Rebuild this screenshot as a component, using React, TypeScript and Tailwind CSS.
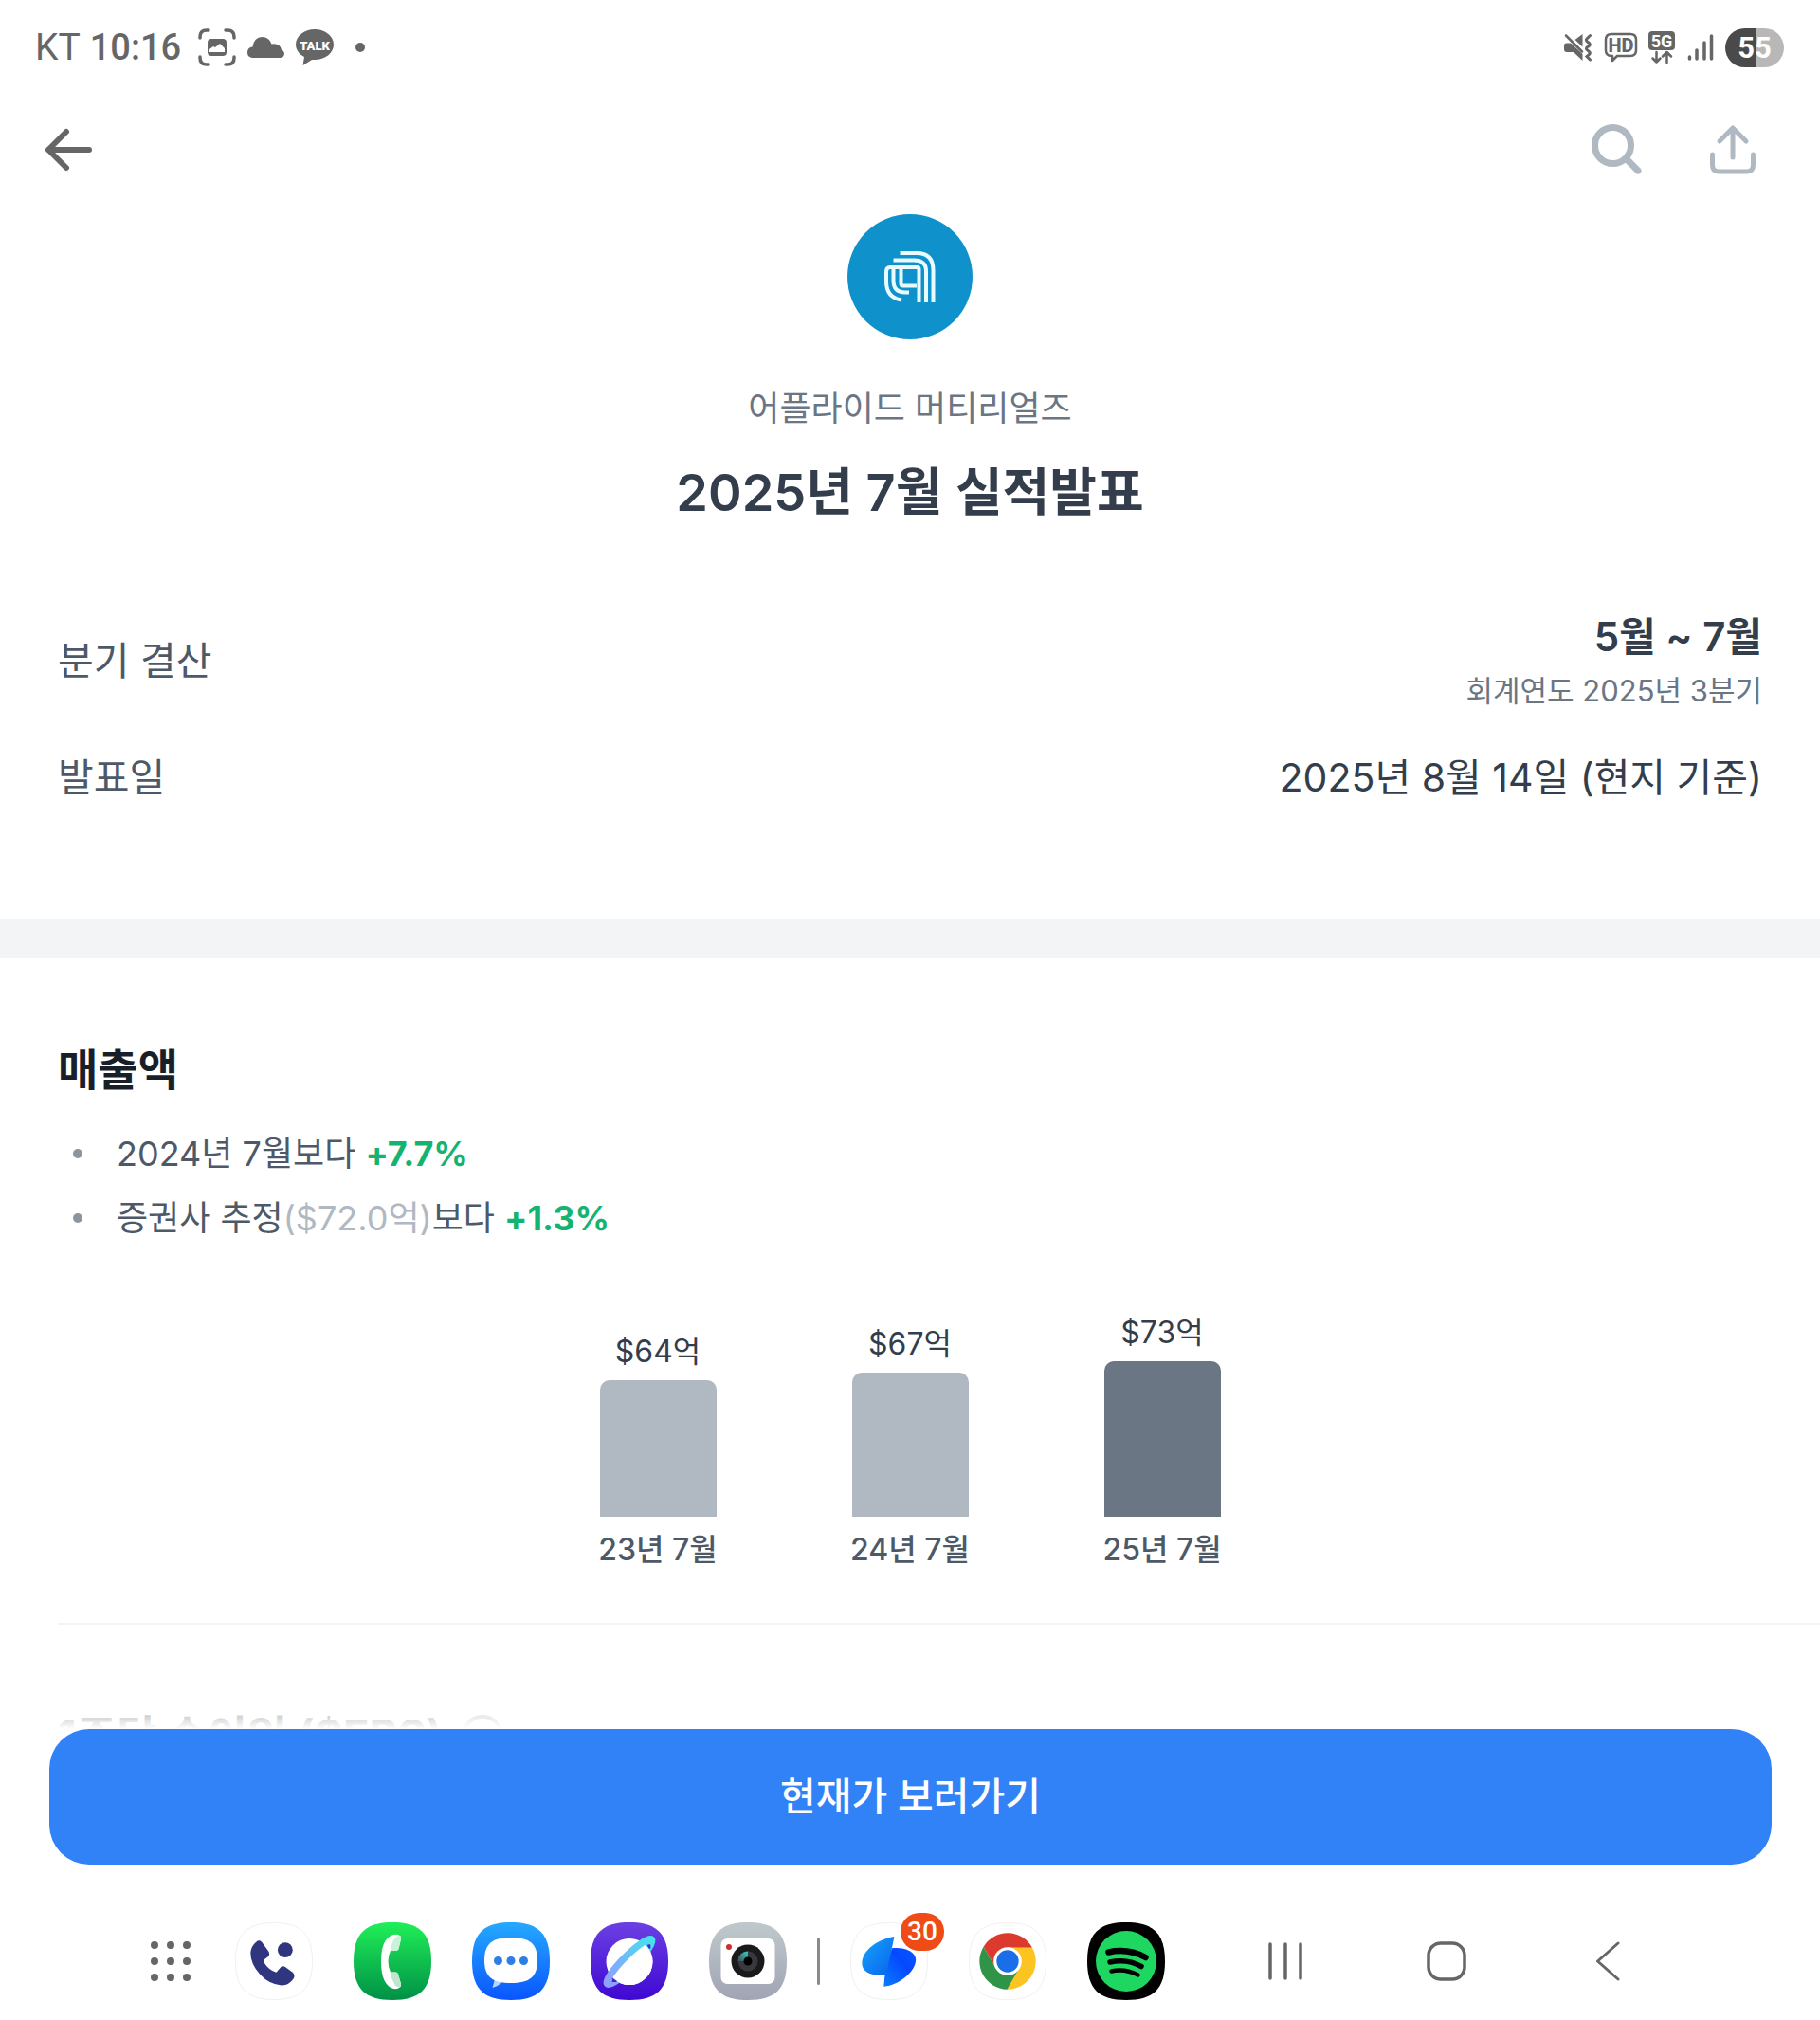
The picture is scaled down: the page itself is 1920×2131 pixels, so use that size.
import type { ReactNode } from "react";

const SQUIRCLE = "M41 0C70 0 82 12 82 41S70 82 41 82S0 70 0 41S12 0 41 0Z";

function CaptureIcon() {
  return (
    <svg width="40" height="40" viewBox="0 0 40 40" fill="none" aria-hidden="true">
      <path
        d="M2 10V9Q2 2 9 2H11M29 2H31Q38 2 38 9V10M38 30V31Q38 38 31 38H29M11 38H9Q2 38 2 31V30"
        stroke="#666"
        strokeWidth="3.500"
        strokeLinecap="round"
      />
      <rect x="10" y="11" width="20" height="18" rx="4" fill="#666" />
      <path d="M12 25V22L16 19L18 20L23 16L28 21V25Z" fill="#fff" />
    </svg>
  );
}

function CloudIcon() {
  return (
    <svg width="40" height="24" viewBox="0 0 40 24" fill="#666" aria-hidden="true">
      <path d="M6 23Q1 22 1 17.500Q1 12 6.500 11.500Q8 1 16.500 1Q24 1 26.500 8.500Q35 7 37 14.500Q40 16 40 19Q39.500 22.500 36 23Z" />
    </svg>
  );
}

function TalkIcon() {
  return (
    <svg width="42" height="40" viewBox="0 0 42 40" aria-hidden="true">
      <path
        d="M21 1C32 1 41 8 41 17S32 33 21 33H18L8.500 39L10 30C4 27 1 22 1 17C1 8 10 1 21 1Z"
        fill="#666"
      />
      <text
        x="21"
        y="22.500"
        textAnchor="middle"
        fontSize="13"
        fontWeight="900"
        fontFamily="Roboto, sans-serif"
        fill="#fff"
      >
        TALK
      </text>
    </svg>
  );
}

function MuteIcon() {
  return (
    <svg width="31" height="30" viewBox="-2 -1 31 30" fill="#666" aria-hidden="true">
      <path d="M-1 12Q-1 9.500 1.500 9.500H6L18.500 21V28L9 19H2Q-1 19 -1 16Z" />
      <path d="M18.500 0V13.500L10.500 6Z" />
      <path d="M1 1.500L18 18.500" stroke="#666" strokeWidth="2.500" strokeLinecap="round" />
      <path
        d="M26.500 1.500L22.500 5.500Q22 7 23.500 8L25.500 9.500Q27 11 25.500 12.500L23 14Q22 15.500 23 16.500L25.500 18.500Q27 20 25.500 21.500L23 23.500L26.500 27"
        stroke="#666"
        strokeWidth="3"
        strokeLinecap="round"
        fill="none"
      />
    </svg>
  );
}

function HdIcon() {
  return (
    <svg width="36" height="32" viewBox="0 0 36 32" fill="none" aria-hidden="true">
      <path
        d="M8 2H28Q34 2 34 8V19Q34 25 28 25H14L9 30V25H8Q2 25 2 19V8Q2 2 8 2Z"
        stroke="#666"
        strokeWidth="2.500"
        strokeLinejoin="round"
      />
      <text
        x="18"
        y="20.500"
        textAnchor="middle"
        fontSize="20"
        fontWeight="800"
        fontFamily="Roboto, sans-serif"
        fill="#666"
      >
        HD
      </text>
    </svg>
  );
}

function FiveGIcon() {
  return (
    <svg width="30" height="36" viewBox="0 0 30 36" fill="none" aria-hidden="true">
      <rect x="1" y="1" width="28" height="20" rx="4" fill="#666" />
      <text
        x="15"
        y="17.500"
        textAnchor="middle"
        fontSize="18"
        fontWeight="700"
        fontFamily="Roboto, sans-serif"
        fill="#fff"
      >
        5G
      </text>
      <path
        d="M9.500 23V33M5.500 29.500L9.500 33.500L13.500 29.500M20.500 34V24M16 27.500L20.500 23L25 27.500"
        stroke="#666"
        strokeWidth="2.500"
        strokeLinecap="round"
        strokeLinejoin="round"
      />
    </svg>
  );
}

function SignalIcon() {
  return (
    <svg width="28" height="30" viewBox="0 0 28 30" stroke="#666" strokeWidth="3.500" strokeLinecap="round" aria-hidden="true">
      <path d="M2.500 25V27M10 18V27M18 10V27M25.500 3V27" />
    </svg>
  );
}

function StatusBar() {
  return (
    <div className="flex h-[100px] items-center justify-between pl-[37px] pr-[38px] font-[Roboto,sans-serif] text-[#666]">
      <div className="flex items-center gap-[10px]">
        <span className="text-[39px] leading-none">KT</span>
        <span className="text-[38px] font-medium leading-none">10:16</span>
        <span className="flex items-center gap-[11px] pl-2">
          <CaptureIcon />
          <CloudIcon />
          <TalkIcon />
        </span>
        <span className="ml-3 size-[10px] rounded-full bg-[#666]" />
      </div>
      <div className="flex items-center gap-3">
        <MuteIcon />
        <div className="flex items-center gap-[10px]">
          <HdIcon />
          <FiveGIcon />
        </div>
        <SignalIcon />
        <span className="flex h-[41px] w-[62px] items-center justify-center rounded-full bg-[linear-gradient(90deg,#4a4a4a_54%,#b8b8b8_54%)] text-[31px] font-bold leading-none text-white">
          55
        </span>
      </div>
    </div>
  );
}

function Header() {
  return (
    <header className="flex h-[115px] items-center justify-between pl-[47px] pr-[66px]">
      <button type="button" aria-label="뒤로">
        <svg width="50" height="46" viewBox="0 0 50 46" fill="none" stroke="#666" strokeWidth="6" strokeLinecap="round" strokeLinejoin="round">
          <path d="M23 4L4 23L23 42M4 23H47" />
        </svg>
      </button>
      <div className="flex items-center gap-[69px]">
        <button type="button" aria-label="검색">
          <svg width="56" height="56" viewBox="0 0 56 56" fill="none" stroke="#b0b8c1" strokeLinecap="round">
            <circle cx="24.500" cy="23.500" r="19" strokeWidth="7" />
            <path d="M39 38L51 50" strokeWidth="7" />
          </svg>
        </button>
        <button type="button" aria-label="공유">
          <svg width="52" height="56" viewBox="0 0 52 56" fill="none" stroke="#b0b8c1" strokeWidth="5" strokeLinecap="round" strokeLinejoin="round">
            <path d="M26 36V5M12 19L26 5L40 19" />
            <path d="M4.500 33V44Q4.500 51 11.500 51H40.500Q47.500 51 47.500 44V33" />
          </svg>
        </button>
      </div>
    </header>
  );
}

function CompanyLogo() {
  return (
    <div className="flex size-[132px] items-center justify-center rounded-full bg-[#0f91cc]">
      <svg width="54" height="54" viewBox="0 0 54 54" fill="none" stroke="#e9fbff" strokeWidth="4" aria-label="Applied Materials" role="img">
        <path d="M16.500 2H34Q51.500 2 51.500 20V54" />
        <path d="M9.500 9.500H31Q44 9.500 44 21V54" />
        <path d="M36.500 54V19Q36.500 17 34.500 17H6Q2 17 2 22V32Q2 49 18 51.500" />
        <path d="M9.500 18V31Q9.500 43.500 22 43.500H26" />
        <path d="M17.500 18V34Q17.500 36.500 20 36.500H34" />
      </svg>
    </div>
  );
}

function Section({ title, info, children }: { title: string; info?: boolean; children?: ReactNode }) {
  return (
    <section className="px-[61px] pt-[85px]">
      <h2 className="flex items-center gap-5 whitespace-nowrap text-[46px] font-bold leading-[64px] text-[#191f28]">
        {title}
        {info && <span className="size-11 rounded-full border-4 border-[#8b95a1]" />}
      </h2>
      {children}
    </section>
  );
}

function Bullet({ children }: { children: ReactNode }) {
  return (
    <li className="flex items-center gap-[36px] pl-4">
      <span className="size-[10px] rounded-full bg-[#8b95a1]" />
      <span>{children}</span>
    </li>
  );
}

const BARS = [
  { value: "$64억", label: "23년 7월", height: 144, color: "bg-[#b0b8c1]" },
  { value: "$67억", label: "24년 7월", height: 152, color: "bg-[#b0b8c1]" },
  { value: "$73억", label: "25년 7월", height: 164, color: "bg-[#6b7684]" },
];

function RevenueChart() {
  return (
    <div className="mt-[67px] flex items-end justify-center gap-[143px]">
      {BARS.map((bar) => (
        <div key={bar.label} className="flex w-[123px] flex-col items-center whitespace-nowrap">
          <span className="text-[32px] leading-10 text-[#333d4b]">{bar.value}</span>
          <div className={`mt-[10px] w-full rounded-t-[10px] ${bar.color}`} style={{ height: bar.height }} />
          <span className="mt-[15px] text-[32px] font-medium leading-10 text-[#4e5968]">{bar.label}</span>
        </div>
      ))}
    </div>
  );
}

function AppTile({ label, children }: { label: string; children: ReactNode }) {
  return (
    <button type="button" aria-label={label} className="relative size-[82px]">
      {children}
    </button>
  );
}

function Dock() {
  return (
    <nav className="flex items-center justify-between pb-[21px] pl-[159px] pr-[211px] pt-[61px]">
      <div className="flex items-center gap-[43px]">
        <button type="button" aria-label="앱 목록" className="mr-1">
          <svg width="42" height="42" viewBox="0 0 42 42" fill="#666">
            {[4, 21, 38].map((y) => [4, 21, 38].map((x) => <circle key={`${x}-${y}`} cx={x} cy={y} r="4" />))}
          </svg>
        </button>
        <AppTile label="전화 앱">
          <svg width="82" height="82" viewBox="-0.5 -0.5 83 83">
            <path d={SQUIRCLE} fill="#fff" stroke="#f0f0f0" />
            <path
              d="M22 20.500Q25 17.500 28 20.500L35 30Q37 33 35 36L31 39Q29.500 40.500 30.500 42.500Q35 50 43.500 53L48.500 47Q50.500 45.500 53 47L61 53Q64 56 62 59.500Q57 67 49 66.700Q36 66 26 55Q16 44 16 32Q16.500 25 22 20.500Z"
              fill="#2f357e"
            />
            <circle cx="53" cy="29" r="8" fill="#2f357e" />
          </svg>
        </AppTile>
        <AppTile label="전화">
          <svg width="82" height="82" viewBox="0 0 82 82">
            <linearGradient id="call" x1="0" y1="0" x2="0" y2="1">
              <stop stopColor="#20ef57" />
              <stop offset="1" stopColor="#009046" />
            </linearGradient>
            <path d={SQUIRCLE} fill="url(#call)" />
            <path
              d="M42 13Q50 12 50 17L47.500 28Q47 30 44 30H39Q36.500 35 36.500 41T39 52.500H44Q46.500 52.500 47 54.500L50 65Q50 71 42 70Q29 66 29 41Q29 17 42 13Z"
              fill="#fff"
            />
            <path d="M43 17Q45 13.500 50 14.500V18L47.500 28Q47 30 44 30H38.500Q40 22 43 17Z" fill="#c9f3d6" />
            <path d="M38.500 52.500H44Q46.500 52.500 47 54.500L50 65V68Q45 69 43 65Q40 60 38.500 52.500Z" fill="#bfe6cf" />
          </svg>
        </AppTile>
        <AppTile label="메시지">
          <svg width="82" height="82" viewBox="0 0 82 82">
            <linearGradient id="msg" x1="0" y1="0" x2="0" y2="1">
              <stop stopColor="#25a9ff" />
              <stop offset="1" stopColor="#0a55ff" />
            </linearGradient>
            <path d={SQUIRCLE} fill="url(#msg)" />
            <path d="M24 60L21.500 69Q28 67 32 63Z" fill="#b5d5ff" />
            <path d="M41 16C60 16 69 22 69 40S60 64 41 64S13 58 13 40S22 16 41 16Z" fill="#fff" />
            <g fill="#2d7fe6">
              <circle cx="27.500" cy="40.500" r="4.500" />
              <circle cx="41" cy="40.500" r="4.500" />
              <circle cx="54.500" cy="40.500" r="4.500" />
            </g>
          </svg>
        </AppTile>
        <AppTile label="인터넷">
          <svg width="82" height="82" viewBox="0 0 82 82">
            <linearGradient id="net" x1="0" y1="0" x2="0" y2="1">
              <stop stopColor="#6b40e2" />
              <stop offset="1" stopColor="#3f08d2" />
            </linearGradient>
            <linearGradient id="ring" x1="0" y1="0" x2="1" y2="0">
              <stop stopColor="#8f9eff" />
              <stop offset="1" stopColor="#48dff0" />
            </linearGradient>
            <clipPath id="behind">
              <path d="M65 18L17 66L41 90L90 41Z" />
            </clipPath>
            <path d={SQUIRCLE} fill="url(#net)" />
            <circle cx="41" cy="41.500" r="24.500" fill="#fff" />
            <ellipse
              cx="41"
              cy="41.500"
              rx="33"
              ry="6.500"
              transform="rotate(-45 41 41.500)"
              fill="none"
              stroke="url(#ring)"
              strokeWidth="7.500"
            />
            <circle cx="41" cy="41.500" r="24.500" fill="#fff" clipPath="url(#behind)" />
            <path d="M59.500 24L63 23L63.500 27L62 28Z" fill="#4b24cf" />
            <path d="M23.500 59L22.500 63L27 63L28 62Z" fill="#4b24cf" />
          </svg>
        </AppTile>
        <AppTile label="카메라">
          <svg width="82" height="82" viewBox="0 0 82 82">
            <linearGradient id="cam" x1="0" y1="0" x2="0" y2="1">
              <stop stopColor="#bfc9cc" />
              <stop offset="1" stopColor="#a1a4b4" />
            </linearGradient>
            <linearGradient id="glint" x1="0" y1="1" x2="1" y2="0">
              <stop stopColor="#4b4757" />
              <stop offset="1" stopColor="#28d6c8" />
            </linearGradient>
            <path d={SQUIRCLE} fill="url(#cam)" />
            <rect x="12.500" y="17" width="57" height="48" rx="7" fill="#fff" />
            <circle cx="21" cy="26" r="3" fill="#d02f2f" />
            <circle cx="41" cy="41" r="17.500" fill="#1a1a1b" />
            <circle cx="41" cy="41" r="10.500" fill="#3a383f" />
            <path d="M41 41V30.500A10.500 10.500 0 0 0 30.500 41Z" fill="url(#glint)" />
            <circle cx="41" cy="41" r="4.500" fill="#000" />
          </svg>
        </AppTile>
        <span className="-mx-[11px] h-[50px] w-[3px] rounded-full bg-[#8a8a8a]" />
        <AppTile label="토스">
          <svg width="82" height="82" viewBox="-0.5 -0.5 83 83">
            <linearGradient id="tossL" x1="0" y1="0" x2="1" y2="1">
              <stop stopColor="#14a4ff" />
              <stop offset="1" stopColor="#0a62ea" />
            </linearGradient>
            <linearGradient id="tossR" x1="0" y1="1" x2="1" y2="0">
              <stop stopColor="#0a7dff" />
              <stop offset="0.6" stopColor="#0548ff" />
              <stop offset="1" stopColor="#0558ff" />
            </linearGradient>
            <path d={SQUIRCLE} fill="#fff" stroke="#f0f0f0" />
            <path d="M44 27C56 25.500 69.500 30 69.500 39.500C69.500 52 51 67 35.300 68Q36 50 44 27Z" fill="url(#tossR)" />
            <path d="M46.500 14.700C30 17 12 29 12 43C12 52 21 57 37 56Q41 42 46.500 14.700Z" fill="url(#tossL)" />
          </svg>
          <span className="absolute -right-[17px] -top-[10px] flex h-10 w-[46px] items-center justify-center rounded-full bg-[#ee4b16] font-[Roboto,sans-serif] text-[28px] font-medium leading-none text-white">
            30
          </span>
        </AppTile>
        <AppTile label="Chrome">
          <svg width="82" height="82" viewBox="-0.5 -0.5 83 83">
            <path d={SQUIRCLE} fill="#fff" stroke="#f0f0f0" />
            <g transform="translate(41 41)">
              <path d="M26.300 -14.500A30 30 0 0 0 -25.700 -15.500L-12.560 7.250L0 -14.500Z" fill="#dd3a2e" />
              <path d="M26.300 -14.500A30 30 0 0 1 -0.600 30L12.560 7.250L0 -14.500Z" fill="#fcc421" />
              <path d="M-0.600 30A30 30 0 0 1 -25.700 -15.500L-12.560 7.250L12.560 7.250Z" fill="#2f9447" />
              <circle r="15" fill="#fff" />
              <circle r="11.800" fill="#1a6fe8" />
            </g>
          </svg>
        </AppTile>
        <AppTile label="Spotify">
          <svg width="82" height="82" viewBox="0 0 82 82">
            <path d={SQUIRCLE} fill="#000" />
            <circle cx="41" cy="41" r="32" fill="#1ed760" />
            <g fill="none" stroke="#000" strokeLinecap="round">
              <path d="M22.500 31.500Q43 27 61.500 37" strokeWidth="6.500" />
              <path d="M24 42Q42 38 57 46.500" strokeWidth="5.500" />
              <path d="M25.500 51.500Q40 48.500 53.500 55.500" strokeWidth="4.500" />
            </g>
          </svg>
        </AppTile>
      </div>
      <div className="flex items-center">
        <button type="button" aria-label="최근 앱">
          <svg width="38" height="42" viewBox="0 0 38 42" stroke="#666" strokeWidth="3.500" strokeLinecap="round">
            <path d="M3 3V39M19 3V39M35 3V39" />
          </svg>
        </button>
        <button type="button" aria-label="홈" className="ml-[130px]">
          <svg width="42" height="42" viewBox="0 0 42 42" fill="none" stroke="#666" strokeWidth="3.500">
            <rect x="2" y="2" width="38" height="38" rx="13" />
          </svg>
        </button>
        <button type="button" aria-label="뒤로 가기" className="ml-[136px]">
          <svg width="26" height="42" viewBox="0 0 26 42" fill="none" stroke="#666" strokeWidth="3" strokeLinecap="round" strokeLinejoin="round">
            <path d="M24 2L2.500 21L24 40" />
          </svg>
        </button>
      </div>
    </nav>
  );
}

export default function App() {
  return (
    <div className="flex h-screen flex-col overflow-hidden bg-white font-[Inter,'Noto_Sans_CJK_KR',sans-serif]">
      <StatusBar />
      <Header />
      <main className="relative min-h-0 flex-1 overflow-hidden">
        <div className="flex flex-col items-center pt-[11px]">
          <CompanyLogo />
          <p className="mt-[49px] text-[36px] leading-[48px] text-[#6b7684]">어플라이드 머티리얼즈</p>
          <h1 className="mt-[29px] text-[54px] font-semibold leading-[72px] text-[#333d4b]">2025년 7월 실적발표</h1>
        </div>

        <dl className="mt-[90px] px-[61px] pb-[122px] text-[41px]">
          <div className="flex items-center justify-between">
            <dt className="text-[#4e5968]">분기 결산</dt>
            <dd className="flex flex-col gap-[11px] text-right text-[#333d4b]">
              <span className="text-[42px] font-semibold leading-[52px]">5월 ~ 7월</span>
              <span className="text-[31px] leading-10 text-[#6b7684]">회계연도 2025년 3분기</span>
            </dd>
          </div>
          <div className="mt-[43px] flex items-center justify-between leading-[56px]">
            <dt className="text-[#4e5968]">발표일</dt>
            <dd className="text-[#333d4b]">2025년 8월 14일 (현지 기준)</dd>
          </div>
        </dl>

        <div className="h-[41px] bg-[#f2f4f6]" />

        <Section title="매출액">
          <ul className="mt-[23px] text-[36px] leading-[68px] text-[#4e5968]">
            <Bullet>
              2024년 7월보다 <strong className="font-bold text-[#15b371]">+7.7%</strong>
            </Bullet>
            <Bullet>
              증권사 추정<span className="text-[#b0b8c1]">($72.0억)</span>보다{" "}
              <strong className="font-bold text-[#15b371]">+1.3%</strong>
            </Bullet>
          </ul>
          <RevenueChart />
        </Section>
        <hr className="ml-[61px] mt-[57px] border-t-2 border-[#f2f4f6]" />
        <Section title="1주당 순이익 ($EPS)" info />
        <div className="absolute inset-x-0 bottom-0 h-[68px] bg-linear-to-b from-white/0 to-white" />
      </main>

      <footer>
        <div className="pl-[52px] pr-[51px]">
          <button
            type="button"
            className="h-[143px] w-full rounded-[42px] bg-[#3182f6] text-[41px] font-medium text-white"
          >
            현재가 보러가기
          </button>
        </div>
        <Dock />
      </footer>
    </div>
  );
}
